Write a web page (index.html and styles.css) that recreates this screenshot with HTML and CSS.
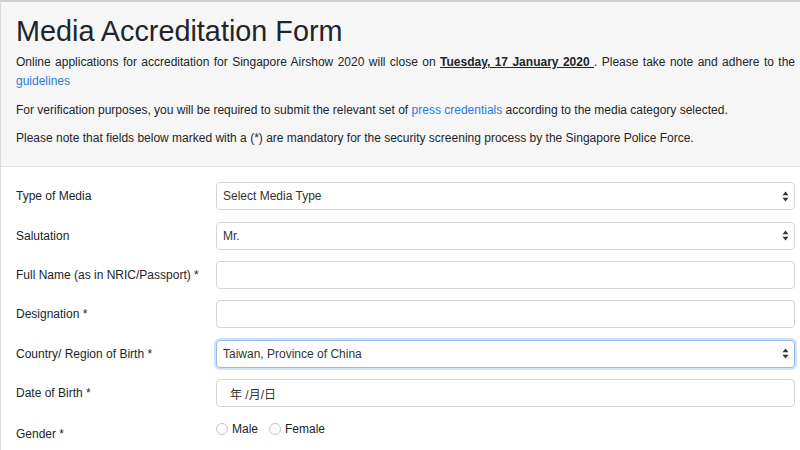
FILE: index.html
```html
<!DOCTYPE html>
<html lang="en">
<head>
    <meta charset="UTF-8">
    <meta name="viewport" content="width=device-width, initial-scale=1.0">
    <title>Media Accreditation Form</title>
    <link rel="stylesheet" href="styles.css">
</head>
<body>
<div class="page">
    <header class="intro">
        <h1 class="intro-title">Media Accreditation Form</h1>
        <p class="intro-text justify">Online applications for accreditation for Singapore Airshow 2020 will close on <u><b>Tuesday, 17 January 2020 </b></u>. Please take note and adhere to the <a href="#">guidelines</a></p>
        <p class="intro-text">For verification purposes, you will be required to submit the relevant set of <a href="#">press credentials</a> according to the media category selected.</p>
        <p class="intro-text">Please note that fields below marked with a (*) are mandatory for the security screening process by the Singapore Police Force.</p>
    </header>

    <form class="form">
        <div class="form-row">
            <label class="form-label">Type of Media</label>
            <select class="control control-select">
                <option>Select Media Type</option>
            </select>
        </div>
        <div class="form-row">
            <label class="form-label">Salutation</label>
            <select class="control control-select">
                <option>Mr.</option>
            </select>
        </div>
        <div class="form-row">
            <label class="form-label">Full Name (as in NRIC/Passport) *</label>
            <input type="text" class="control">
        </div>
        <div class="form-row">
            <label class="form-label">Designation *</label>
            <input type="text" class="control">
        </div>
        <div class="form-row">
            <label class="form-label">Country/ Region of Birth *</label>
            <select class="control control-select is-focused">
                <option>Taiwan, Province of China</option>
            </select>
        </div>
        <div class="form-row">
            <label class="form-label">Date of Birth *</label>
            <input type="text" class="control control-date" value="年 /月/日">
        </div>
        <div class="form-row form-row-radio">
            <label class="form-label label-radio">Gender *</label>
            <div class="radios">
                <label class="radio"><input type="radio" name="gender"> Male</label>
                <label class="radio"><input type="radio" name="gender"> Female</label>
            </div>
        </div>
    </form>
</div>
</body>
</html>
```

FILE: styles.css
```css
body
{
    margin: 0;
    font-family: "Liberation Sans", Arial, sans-serif;
    font-size: 12px;
    color: #212529;
    background-color: white;
}
.page
{
    border-top: 2px solid #cfcfcf;
    border-left: 1px solid #dcdcdc;
    height: 448px;
    overflow: hidden;
}
.intro
{
    background-color: #f6f6f6;
    border-bottom: 1px solid #e2e2e2;
    padding: 12px 5px 18px 15px;
}
.intro-title
{
    margin: 0 0 4px 0;
    font-size: 28.8px;
    font-weight: 500;
    line-height: 35px;
}
.intro-text
{
    margin: 0 0 10px 0;
    line-height: 18.8px;
}
.intro-text:last-child
{
    margin-bottom: 0;
}
.justify
{
    text-align: justify;
}
a
{
    color: #2a7ae0;
    text-decoration: none;
}
.form
{
    padding: 15px 5px 0 15px;
}
.form-row
{
    display: grid;
    grid-template-columns: 200px 1fr;
    align-items: center;
    margin-bottom: 11.4px;
}
.form-label
{
    line-height: 18px;
}
.control
{
    box-sizing: border-box;
    width: 100%;
    height: 28px;
    margin: 0;
    padding: 0 6px;
    font-family: "Liberation Sans", Arial, sans-serif;
    font-size: 12px;
    color: #495057;
    background-color: white;
    border: 1px solid #d6d6d6;
    border-radius: 4px;
    outline: none;
}
.control-select
{
    -webkit-appearance: none;
    appearance: none;
    background-image: url("data:image/svg+xml,%3Csvg xmlns='http://www.w3.org/2000/svg' width='7' height='11' viewBox='0 0 7 11'%3E%3Cpath d='M3.5 0.5 L6.5 4.3 H0.5 Z M3.5 10.5 L6.5 6.7 H0.5 Z' fill='%23333'/%3E%3C/svg%3E");
    background-repeat: no-repeat;
    background-position: right 5px center;
    background-size: 7px 11px;
    color: #333;
}
.is-focused
{
    border-color: #92bcf0;
    box-shadow: 0 0 0 2px rgba(80, 145, 235, 0.25);
}
.control-date
{
    padding-left: 13px;
    font-family: "Liberation Sans", "Noto Sans CJK SC", sans-serif;
    color: #333;
}
.form-row-radio
{
    align-items: start;
    padding-top: 1px;
}
.label-radio
{
    padding-top: 5px;
}
.radios
{
    display: flex;
    gap: 11px;
}
.radio
{
    display: flex;
    align-items: center;
    gap: 4px;
    line-height: 18px;
}
.radio input
{
    -webkit-appearance: none;
    appearance: none;
    box-sizing: border-box;
    width: 12px;
    height: 12px;
    margin: 0;
    border: 1px solid #c4c4c4;
    border-radius: 50%;
    background-color: white;
}
```
